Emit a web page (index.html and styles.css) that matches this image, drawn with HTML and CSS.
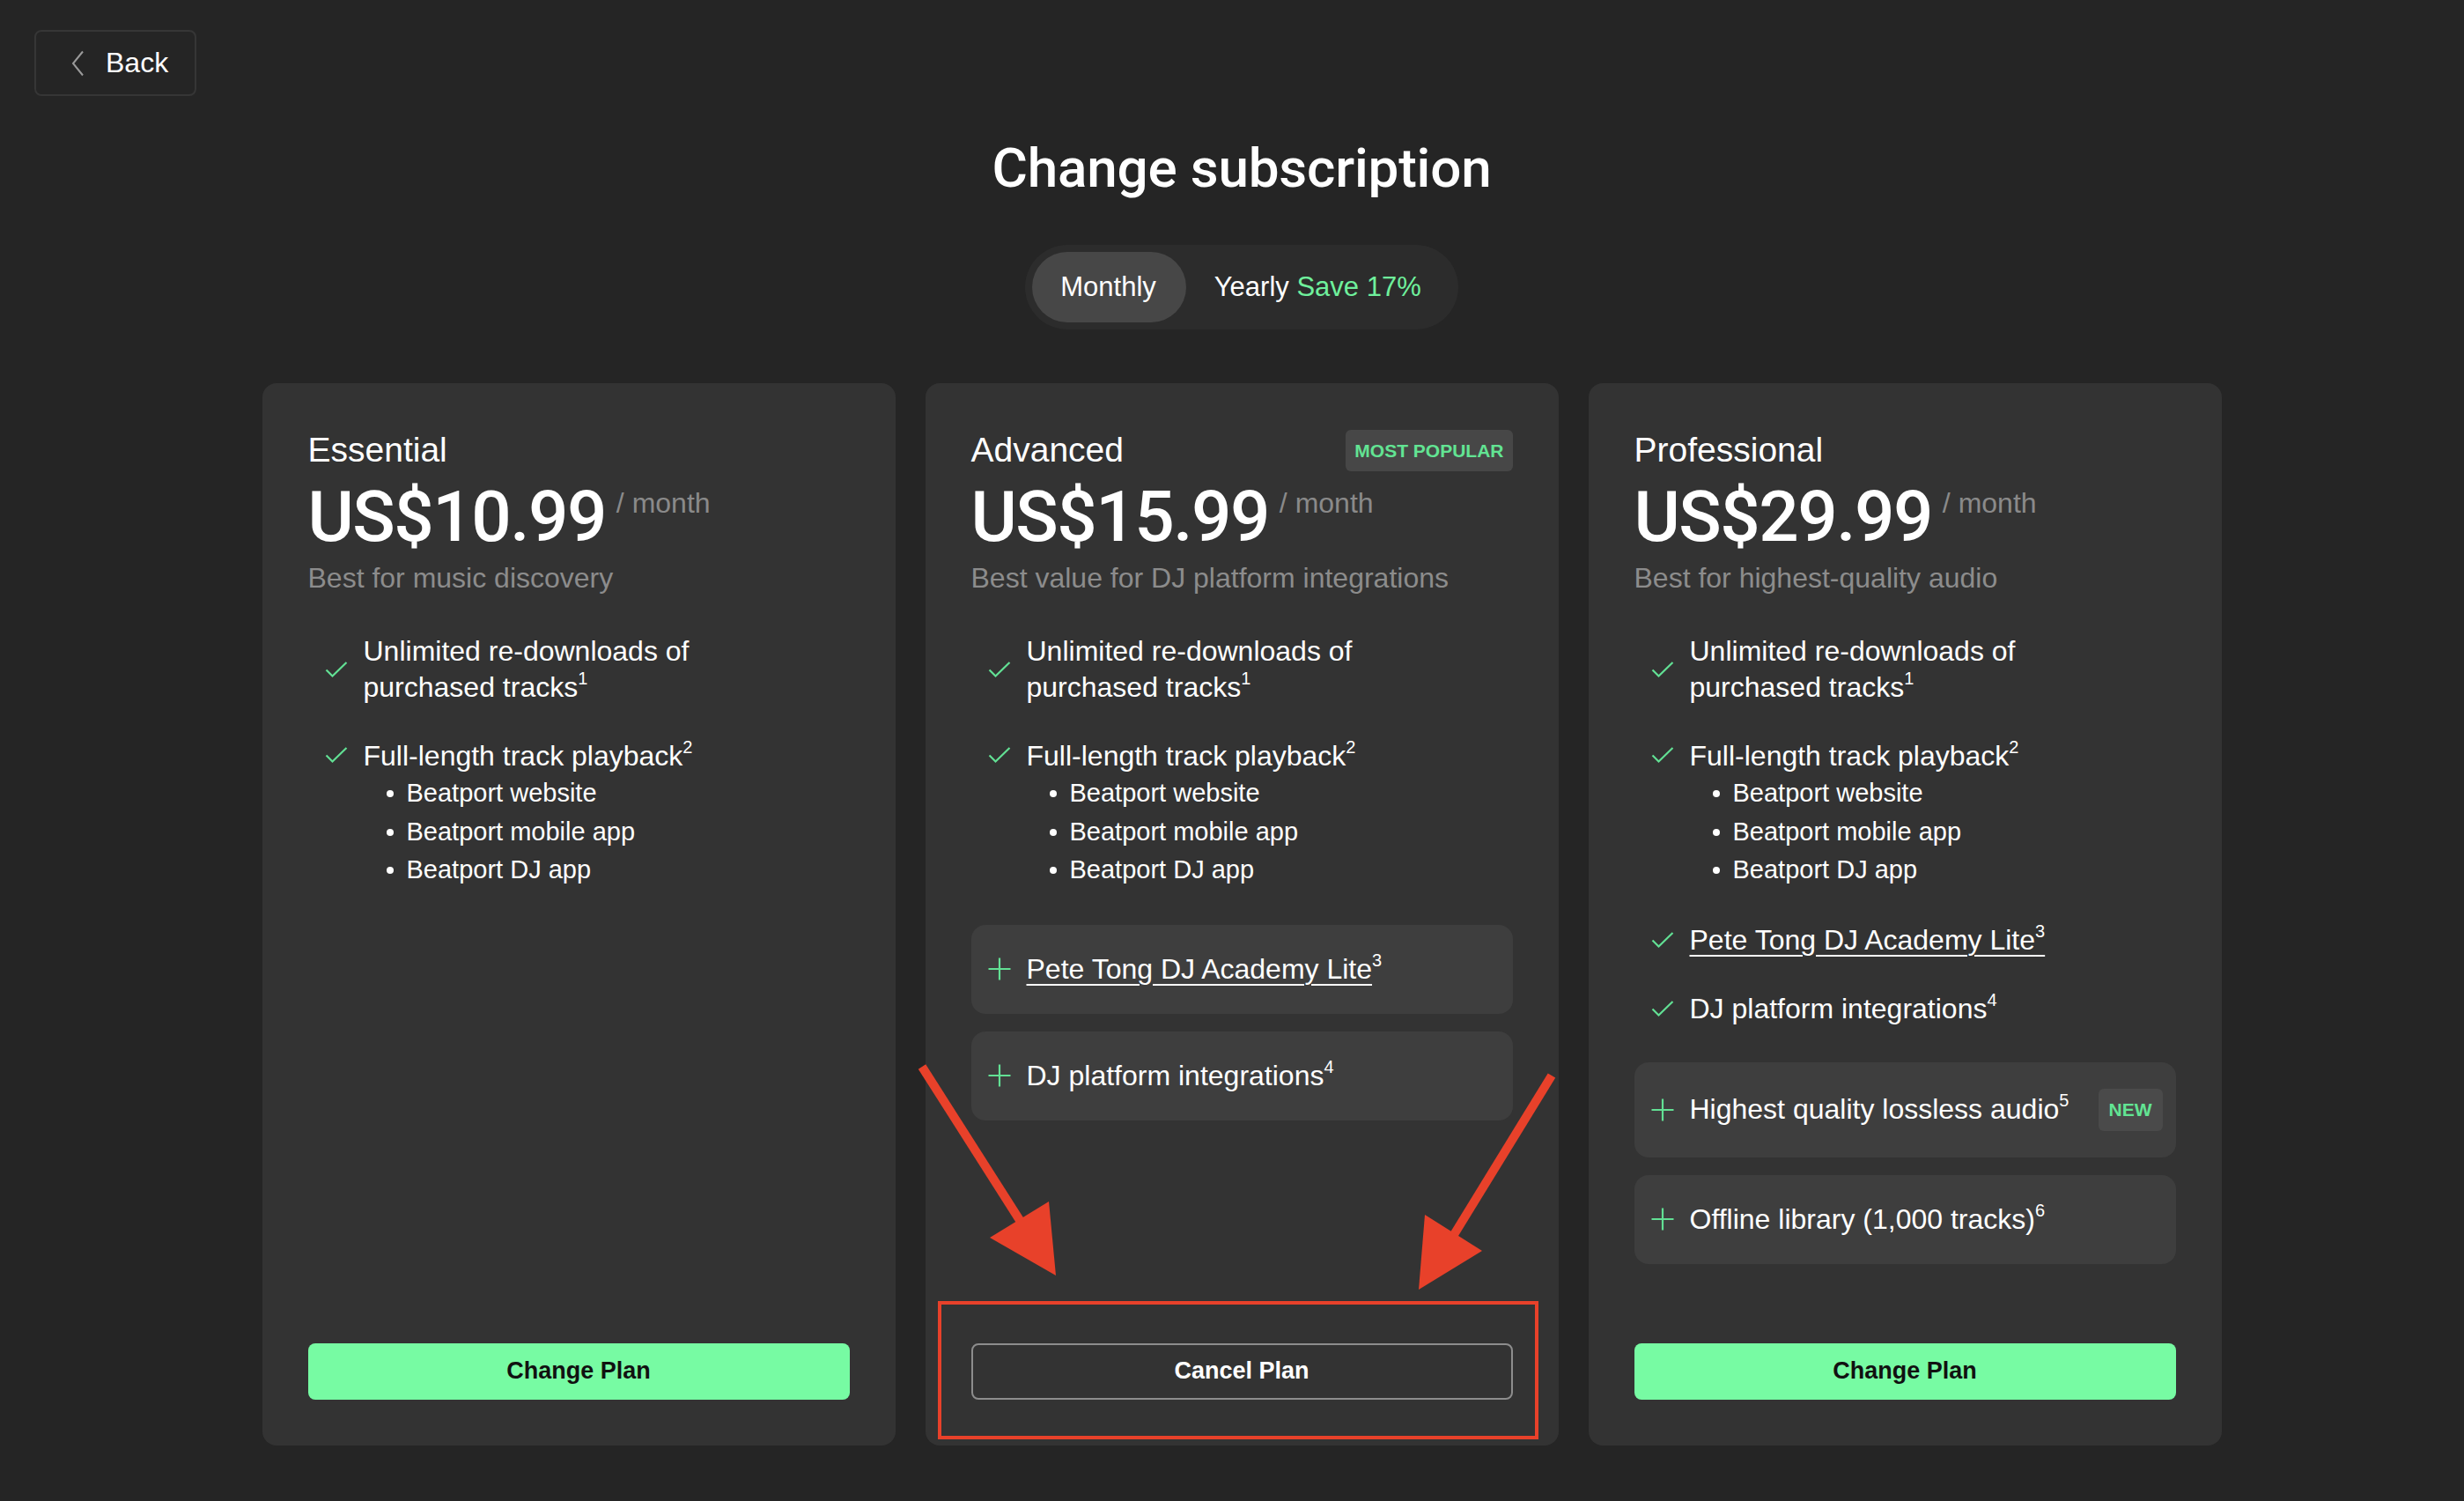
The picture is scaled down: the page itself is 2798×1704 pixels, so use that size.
FILE: index.html
```html
<!DOCTYPE html>
<html>
<head>
<title>Change subscription</title>
<meta charset="UTF-8">
<link rel="stylesheet" href="styles.css">
</head>
<body>
<header class="topbar">
  <a class="back-btn" href="#">
    <svg class="back-icon" viewBox="0 0 16 30" width="16" height="30"><path d="M14 1.5 L3 15 L14 28.5" fill="none" stroke="#9a9a9a" stroke-width="2"/></svg>
    <span>Back</span>
  </a>
</header>

<main class="page">
  <h1 class="page-title">Change subscription</h1>

  <div class="billing-toggle">
    <button class="toggle-opt is-active">Monthly</button>
    <button class="toggle-opt">Yearly <span class="save">Save 17%</span></button>
  </div>

  <section class="plans">
    <article class="plan">
      <div class="plan-head">
        <h2 class="plan-name">Essential</h2>
      </div>
      <div class="plan-price"><span class="price-amount">US$10.99</span><span class="price-unit">/ month</span></div>
      <p class="plan-tagline">Best for music discovery</p>
      <ul class="features">
        <li class="feature">
          <div class="feature-row">
            <svg class="ico" viewBox="0 0 26 26"><path d="M1.5 13.5 L8.5 20.5 L24.5 5"/></svg>
            <span>Unlimited re-downloads of<br>purchased tracks<sup>1</sup></span>
          </div>
        </li>
        <li class="feature">
          <div class="feature-row">
            <svg class="ico" viewBox="0 0 26 26"><path d="M1.5 13.5 L8.5 20.5 L24.5 5"/></svg>
            <span>Full-length track playback<sup>2</sup></span>
          </div>
          <ul class="sublist">
            <li>Beatport website</li>
            <li>Beatport mobile app</li>
            <li>Beatport DJ app</li>
          </ul>
        </li>
      </ul>
      <div class="plan-action"><button class="btn btn-green">Change Plan</button></div>
    </article>

    <article class="plan plan-current">
      <div class="plan-head">
        <h2 class="plan-name">Advanced</h2>
        <span class="badge">MOST POPULAR</span>
      </div>
      <div class="plan-price"><span class="price-amount">US$15.99</span><span class="price-unit">/ month</span></div>
      <p class="plan-tagline">Best value for DJ platform integrations</p>
      <ul class="features">
        <li class="feature">
          <div class="feature-row">
            <svg class="ico" viewBox="0 0 26 26"><path d="M1.5 13.5 L8.5 20.5 L24.5 5"/></svg>
            <span>Unlimited re-downloads of<br>purchased tracks<sup>1</sup></span>
          </div>
        </li>
        <li class="feature">
          <div class="feature-row">
            <svg class="ico" viewBox="0 0 26 26"><path d="M1.5 13.5 L8.5 20.5 L24.5 5"/></svg>
            <span>Full-length track playback<sup>2</sup></span>
          </div>
          <ul class="sublist">
            <li>Beatport website</li>
            <li>Beatport mobile app</li>
            <li>Beatport DJ app</li>
          </ul>
        </li>
      </ul>
      <div class="addons">
        <div class="addon">
          <svg class="ico" viewBox="0 0 26 26"><path d="M13 0.5 V25.5 M0.5 13 H25.5"/></svg>
          <span><a class="link" href="#">Pete Tong DJ Academy Lite</a><sup>3</sup></span>
        </div>
        <div class="addon">
          <svg class="ico" viewBox="0 0 26 26"><path d="M13 0.5 V25.5 M0.5 13 H25.5"/></svg>
          <span>DJ platform integrations<sup>4</sup></span>
        </div>
      </div>
      <div class="plan-action"><button class="btn btn-outline">Cancel Plan</button></div>

      <!-- screenshot markup drawn over the card -->
      <svg class="annotation" viewBox="-20 0 760 1208" width="760" height="1208">
        <rect x="16" y="1044" width="678" height="153" fill="none" stroke="#e8412a" stroke-width="4"/>
        <line x1="-4" y1="776" x2="110" y2="955" stroke="#e8412a" stroke-width="10"/>
        <polygon points="73,970 140,929 148,1013" fill="#e8412a"/>
        <line x1="711" y1="786" x2="598" y2="970" stroke="#e8412a" stroke-width="10"/>
        <polygon points="567,944 632,985 560,1029" fill="#e8412a"/>
      </svg>
    </article>

    <article class="plan">
      <div class="plan-head">
        <h2 class="plan-name">Professional</h2>
      </div>
      <div class="plan-price"><span class="price-amount">US$29.99</span><span class="price-unit">/ month</span></div>
      <p class="plan-tagline">Best for highest-quality audio</p>
      <ul class="features">
        <li class="feature">
          <div class="feature-row">
            <svg class="ico" viewBox="0 0 26 26"><path d="M1.5 13.5 L8.5 20.5 L24.5 5"/></svg>
            <span>Unlimited re-downloads of<br>purchased tracks<sup>1</sup></span>
          </div>
        </li>
        <li class="feature">
          <div class="feature-row">
            <svg class="ico" viewBox="0 0 26 26"><path d="M1.5 13.5 L8.5 20.5 L24.5 5"/></svg>
            <span>Full-length track playback<sup>2</sup></span>
          </div>
          <ul class="sublist">
            <li>Beatport website</li>
            <li>Beatport mobile app</li>
            <li>Beatport DJ app</li>
          </ul>
        </li>
        <li class="feature">
          <div class="feature-row">
            <svg class="ico" viewBox="0 0 26 26"><path d="M1.5 13.5 L8.5 20.5 L24.5 5"/></svg>
            <span><a class="link" href="#">Pete Tong DJ Academy Lite<sup>3</sup></a></span>
          </div>
        </li>
        <li class="feature">
          <div class="feature-row">
            <svg class="ico" viewBox="0 0 26 26"><path d="M1.5 13.5 L8.5 20.5 L24.5 5"/></svg>
            <span>DJ platform integrations<sup>4</sup></span>
          </div>
        </li>
      </ul>
      <div class="addons">
        <div class="addon">
          <svg class="ico" viewBox="0 0 26 26"><path d="M13 0.5 V25.5 M0.5 13 H25.5"/></svg>
          <span>Highest quality lossless audio<sup>5</sup></span>
          <span class="badge badge-new">NEW</span>
        </div>
        <div class="addon">
          <svg class="ico" viewBox="0 0 26 26"><path d="M13 0.5 V25.5 M0.5 13 H25.5"/></svg>
          <span>Offline library (1,000 tracks)<sup>6</sup></span>
        </div>
      </div>
      <div class="plan-action"><button class="btn btn-green">Change Plan</button></div>
    </article>
  </section>
</main>
</body>
</html>
```

FILE: styles.css
```css
body { margin: 0; background: #252525; color: #fff; font-family: "Liberation Sans", Arial, sans-serif; }
a { color: inherit; text-decoration: none; }
ul { list-style: none; margin: 0; padding: 0; }
h1, h2, p { margin: 0; }
button { font-family: inherit; cursor: pointer; }

/* top bar */
.topbar { padding: 34px 0 0 39px; }
.back-btn { display: inline-flex; align-items: center; gap: 24px; height: 75px; box-sizing: border-box; padding: 0 30px 0 39px; border: 2px solid #363636; border-radius: 8px; font-size: 32px; }
.back-icon { display: block; }

/* main column */
.page { padding-left: 22px; display: flex; flex-direction: column; align-items: center; padding-bottom: 60px; }
.page-title { margin-top: 45px; font-family: Roboto, "Liberation Sans", sans-serif; font-weight: 500; font-size: 62px; line-height: 74px; letter-spacing: -0.2px; }

.billing-toggle { margin-top: 50px; display: flex; padding: 8px; background: #2c2c2c; border-radius: 48px; }
.toggle-opt { height: 80px; padding: 0 34px 0 32px; border: 0; border-radius: 40px; background: transparent; color: #fff; font-size: 31px; }
.toggle-opt.is-active { background: #474747; }
.toggle-opt .save { color: #6ff09c; }

/* plan cards */
.plans { margin-top: 61px; display: grid; grid-template-columns: repeat(3, 719px); gap: 34px; }
.plan { position: relative; display: flex; flex-direction: column; padding: 52px; background: #333; border-radius: 16px; }
.plan-head { display: flex; justify-content: space-between; align-items: center; height: 48px; }
.plan-name { font-weight: 400; font-size: 39px; line-height: 48px; }
.badge { height: 47px; line-height: 47px; padding: 0 10px; border-radius: 6px; background: #474747; color: #62e493; font-weight: 700; font-size: 21px; }

.plan-price { display: flex; align-items: flex-start; margin-top: 12px; }
.price-amount { font-family: Roboto, "Liberation Sans", sans-serif; font-weight: 500; font-size: 80px; line-height: 80px; letter-spacing: -1.5px; }
.price-unit { margin: 4px 0 0 12px; font-size: 32px; line-height: 40px; color: #8a8a8a; }
.plan-tagline { margin-top: 9px; font-size: 32px; line-height: 40px; color: #8c8c8c; }

.features { margin-top: 43px; display: flex; flex-direction: column; gap: 37px; }
.feature-row { display: flex; align-items: center; gap: 18px; padding-left: 19px; font-size: 32px; line-height: 41px; }
.ico { flex: none; width: 26px; height: 26px; fill: none; stroke: #62e094; stroke-width: 2.2; }
.feature:has(.sublist) .ico { align-self: flex-start; margin-top: 6px; }
sup { font-size: 20px; line-height: 0; vertical-align: 14px; }
.sublist { padding-left: 112px; }
.sublist li { position: relative; font-size: 29px; line-height: 43.5px; }
.sublist li::before { content: ""; position: absolute; left: -23px; top: 18px; width: 8px; height: 8px; border-radius: 50%; background: #fff; }
.link { text-decoration: underline; text-decoration-thickness: 2px; text-underline-offset: 6px; }

.addons { margin-top: 40px; display: flex; flex-direction: column; gap: 20px; }
.addon { display: flex; align-items: center; gap: 18px; min-height: 41px; padding: 30px 15px 30px 19px; background: #3e3e3e; border-radius: 16px; font-size: 32px; line-height: 41px; }
.badge-new { margin-left: auto; height: 48px; line-height: 48px; padding: 0 12px; background: #4a4a4a; }

.plan-action { margin-top: auto; padding-top: 90px; }
.btn { display: block; width: 100%; height: 64px; border-radius: 8px; font-weight: 700; font-size: 27px; }
.btn-green { border: 0; background: #77fba3; color: #111; }
.btn-outline { border: 2px solid #8d8d8d; background: transparent; color: #fff; }

.annotation { position: absolute; left: -20px; top: 0; pointer-events: none; }
```
